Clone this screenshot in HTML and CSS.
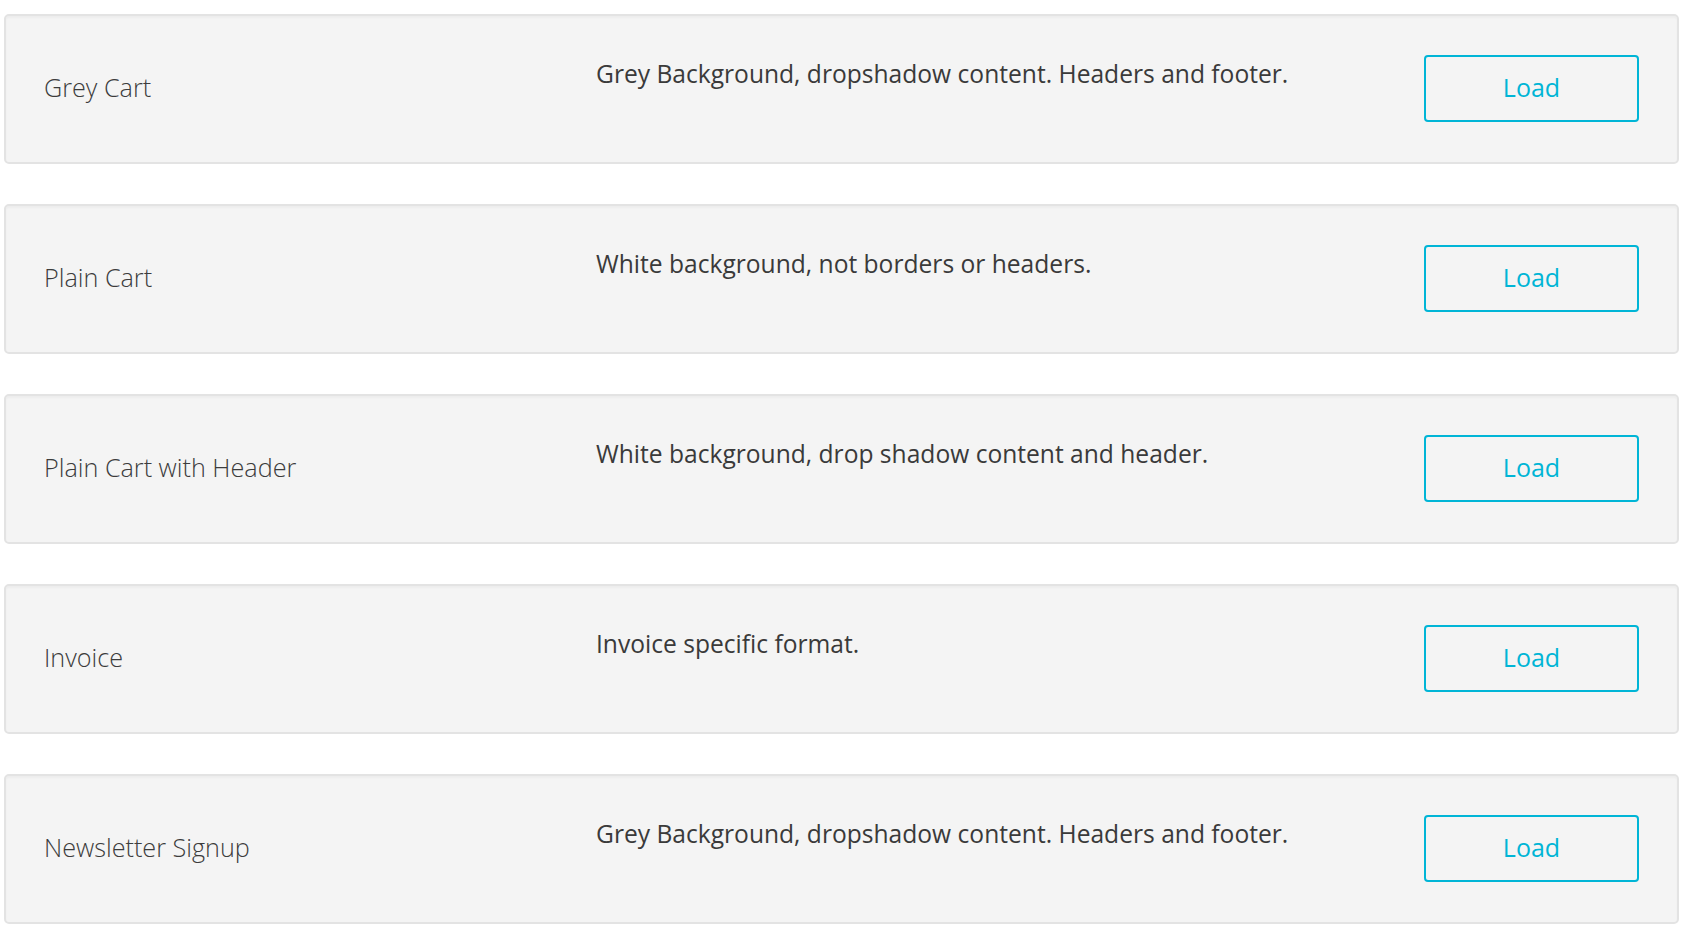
FILE: index.html
```html
<!DOCTYPE html>
<html lang="en">
<head>
    <meta charset="UTF-8">
    <meta name="viewport" content="width=device-width, initial-scale=1.0">
    <title>Templates</title>
    <link rel="stylesheet" href="styles.css">
</head>
<body>
    <div class="template-list">
        <div class="template-card">
            <div class="template-name">Grey Cart</div>
            <div class="template-desc">Grey Background, dropshadow content. Headers and footer.</div>
            <button class="load-btn">Load</button>
        </div>
        <div class="template-card">
            <div class="template-name">Plain Cart</div>
            <div class="template-desc">White background, not borders or headers.</div>
            <button class="load-btn">Load</button>
        </div>
        <div class="template-card">
            <div class="template-name">Plain Cart with Header</div>
            <div class="template-desc">White background, drop shadow content and header.</div>
            <button class="load-btn">Load</button>
        </div>
        <div class="template-card">
            <div class="template-name">Invoice</div>
            <div class="template-desc">Invoice specific format.</div>
            <button class="load-btn">Load</button>
        </div>
        <div class="template-card">
            <div class="template-name">Newsletter Signup</div>
            <div class="template-desc">Grey Background, dropshadow content. Headers and footer.</div>
            <button class="load-btn">Load</button>
        </div>
    </div>
</body>
</html>
```

FILE: styles.css
```css
body {
    margin: 0;
    background: #ffffff;
    font-family: "Open Sans", "Noto Sans", Arial, sans-serif;
}
.template-list {
    display: flex;
    flex-direction: column;
    gap: 40px;
    padding: 14px 9px 0 4px;
}
.template-card {
    display: grid;
    grid-template-columns: 552px 1fr 215px;
    align-items: center;
    height: 150px;
    box-sizing: border-box;
    padding: 0 38px 0 38px;
    background-color: #f4f4f4;
    border: 2px solid #e3e3e3;
    border-radius: 5px;
    box-shadow: inset 0 2px 2px rgba(0, 0, 0, 0.03);
}
.template-name {
    margin-bottom: 4px;
    font-size: 25.2px;
    font-weight: 300;
    color: #3c3c3c;
}
.template-desc {
    align-self: start;
    margin-top: 41px;
    font-size: 24.6px;
    color: #3a3a3a;
}
.load-btn {
    width: 215px;
    height: 67px;
    margin-top: -2px;
    padding-bottom: 4px;
    background: transparent;
    border: 2px solid #00b5d6;
    border-radius: 4px;
    color: #00b5d6;
    font-family: inherit;
    font-size: 25px;
    cursor: pointer;
}
```
